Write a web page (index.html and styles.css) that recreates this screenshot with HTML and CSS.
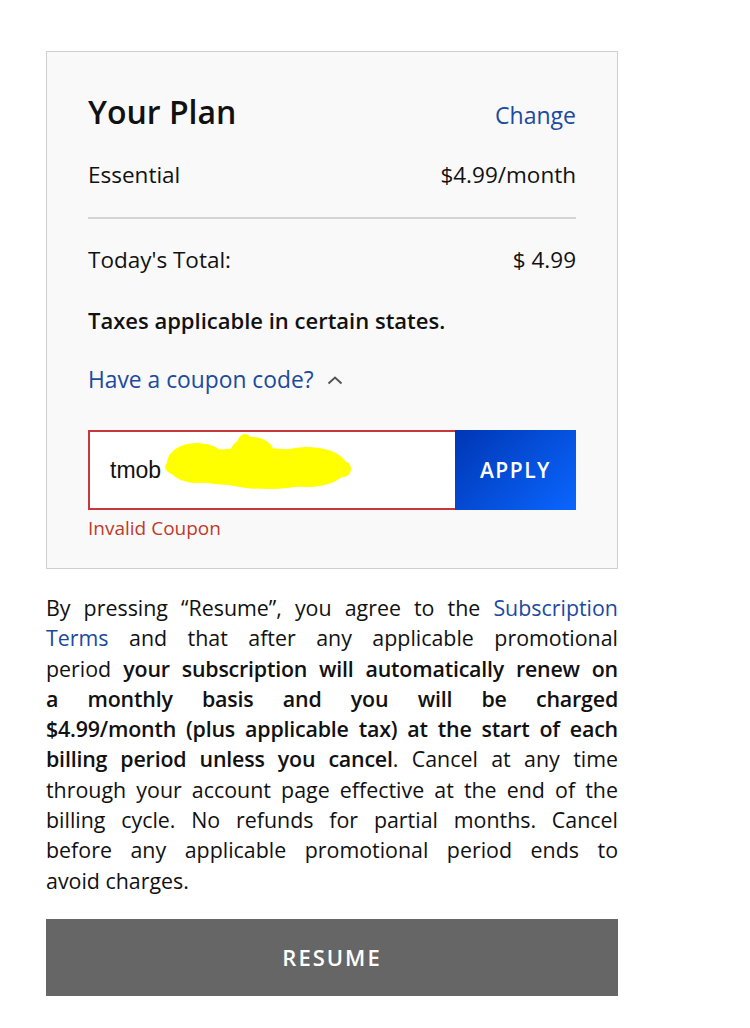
FILE: index.html
```html
<!DOCTYPE html>
<html>
<head>
<meta charset="utf-8">
<link rel="stylesheet" href="styles.css">
</head>
<body>
<div class="page">
  <div class="card">
    <div class="row head">
      <h1 class="title">Your Plan</h1>
      <span class="link change">Change</span>
    </div>
    <div class="row plan">
      <span>Essential</span>
      <span>$4.99/month</span>
    </div>
    <hr class="divider">
    <div class="row total">
      <span>Today's Total:</span>
      <span>$ 4.99</span>
    </div>
    <p class="taxes">Taxes applicable in certain states.</p>
    <div class="coupon-toggle">
      <span class="link">Have a coupon code?</span>
      <svg class="chev" width="16" height="9" viewBox="0 0 16 9"><path d="M1.5 7.5 L8 1.5 L14.5 7.5" fill="none" stroke="#555" stroke-width="2"/></svg>
    </div>
    <div class="coupon">
      <div class="input">
        <span class="code">tmob</span>
        <svg class="scribble" width="196" height="60" viewBox="0 0 196 60">
          <g fill="#ffff00">
            <ellipse cx="98" cy="34" rx="90" ry="19"/>
            <ellipse cx="40" cy="30" rx="30" ry="20"/>
            <ellipse cx="150" cy="34" rx="40" ry="20"/>
            <ellipse cx="95" cy="20" rx="22" ry="16"/>
            <ellipse cx="88" cy="12" rx="8" ry="11"/>
            <ellipse cx="110" cy="38" rx="60" ry="18"/>
            <circle cx="186" cy="36" r="8"/>
          </g>
        </svg>
      </div>
      <div class="apply">APPLY</div>
    </div>
    <div class="error">Invalid Coupon</div>
  </div>
  <p class="terms">
    <span class="line">By pressing “Resume”, you agree to the <span class="link">Subscription</span></span>
    <span class="line"><span class="link">Terms</span> and that after any applicable promotional</span>
    <span class="line">period <b>your subscription will automatically renew on</b></span>
    <span class="line"><b>a monthly basis and you will be charged</b></span>
    <span class="line"><b>$4.99/month (plus applicable tax) at the start of each</b></span>
    <span class="line"><b>billing period unless you cancel</b>. Cancel at any time</span>
    <span class="line">through your account page effective at the end of the</span>
    <span class="line">billing cycle. No refunds for partial months. Cancel</span>
    <span class="line">before any applicable promotional period ends to</span>
    <span class="line last">avoid charges.</span>
  </p>
  <div class="resume">RESUME</div>
</div>
</body>
</html>
```
FILE: styles.css
```css
* { box-sizing: border-box; }
body {
  margin: 0;
  background: #fff;
  font-family: "Open Sans", Lato, sans-serif;
  color: #111;
}
.page {
  width: 572px;
  margin-left: 46px;
  padding-top: 51px;
}
.card {
  background: #f9f9f9;
  border: 1px solid #cfcfcf;
  padding: 42px 41px 28px 41px;
}
.row {
  display: flex;
  justify-content: space-between;
  align-items: baseline;
}
.title {
  margin: 0;
  font-size: 32px;
  font-weight: 600;
  line-height: 36px;
  color: #111;
}
.link { color: #1c4aa0; }
.change { font-size: 23px; }
.plan {
  margin-top: 30px;
  font-size: 22.5px;
  line-height: 28px;
}
.divider {
  margin: 28px 0 0 0;
  border: 0;
  border-top: 2px solid #d4d4d4;
}
.total {
  margin-top: 27px;
  font-size: 22.5px;
  line-height: 28px;
}
.taxes {
  margin: 32px 0 0 0;
  font-size: 22px;
  line-height: 28px;
  font-weight: 600;
}
.coupon-toggle {
  margin-top: 32px;
  display: flex;
  align-items: center;
  gap: 13px;
  font-size: 22.8px;
  line-height: 28px;
}
.coupon {
  margin-top: 36px;
  display: flex;
  height: 80px;
}
.input {
  flex: 1;
  background: #fff;
  border: 2px solid #c8383a;
  border-right: 0;
  display: flex;
  align-items: center;
  padding-left: 20px;
  font-family: "Liberation Sans", Arial, sans-serif;
  font-size: 23px;
  color: #111;
  position: relative;
}
.scribble {
  position: absolute;
  left: 67px;
  top: 1px;
}
.apply {
  width: 121px;
  background: linear-gradient(135deg, #0036b4 0%, #0a66ff 100%);
  color: #fff;
  display: flex;
  align-items: center;
  justify-content: center;
  font-size: 21px;
  font-weight: 600;
  letter-spacing: 1.5px;
}
.error {
  margin-top: 6px;
  color: #c0392b;
  font-size: 19px;
  line-height: 24px;
}
.card + .terms { margin-top: 24px; }
.terms {
  margin: 0;
  font-size: 21.4px;
  line-height: 30.3px;
  color: #111;
}
.terms .line {
  display: block;
  white-space: nowrap;
  text-align: justify;
  text-align-last: justify;
}
.terms .line.last { text-align-last: left; }
.terms b {
  font-weight: 600;
  letter-spacing: -0.2px;
}
.resume {
  margin-top: 23px;
  height: 77px;
  background: #666;
  color: #fff;
  display: flex;
  align-items: center;
  justify-content: center;
  font-size: 22px;
  font-weight: 600;
  letter-spacing: 2px;
}
```
